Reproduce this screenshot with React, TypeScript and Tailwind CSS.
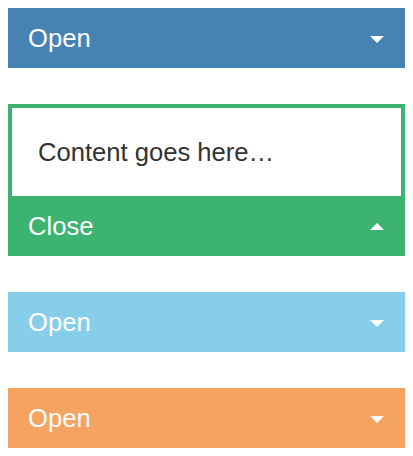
const panels = [
  { title: 'Open', color: 'bg-[#4682b4]', open: false },
  { title: 'Close', color: 'bg-[#3cb371]', open: true },
  { title: 'Open', color: 'bg-[#87ceeb]', open: false },
  { title: 'Open', color: 'bg-[#f4a460]', open: false },
]

function Caret({ up }: { up: boolean }) {
  return (
    <svg
      width="14"
      height="7"
      viewBox="0 0 14 7"
      className={up ? 'mt-[1px]' : 'mt-[3px]'}
    >
      <path d={up ? 'M0 7 L7 0 L14 7 Z' : 'M0 0 L14 0 L7 7 Z'} fill="#fff" />
    </svg>
  )
}

export default function App() {
  return (
    <div className="flex flex-col gap-[36px] p-2 bg-white font-['Liberation_Sans',Arial,sans-serif]">
      {panels.map((p, i) => (
        <div key={i} className={p.open ? `${p.color} flex flex-col` : ''}>
          {p.open && (
            <div className="mx-1 mt-1 bg-white px-[26px] py-[26px] text-[25.6px] leading-[36px] text-[#333]">
              Content goes here…
            </div>
          )}
          <div
            className={`${p.color} flex h-[60px] items-center justify-between pl-5 pr-[21px] text-[25.6px] text-white`}
          >
            <span>{p.title}</span>
            <Caret up={p.open} />
          </div>
        </div>
      ))}
    </div>
  )
}
